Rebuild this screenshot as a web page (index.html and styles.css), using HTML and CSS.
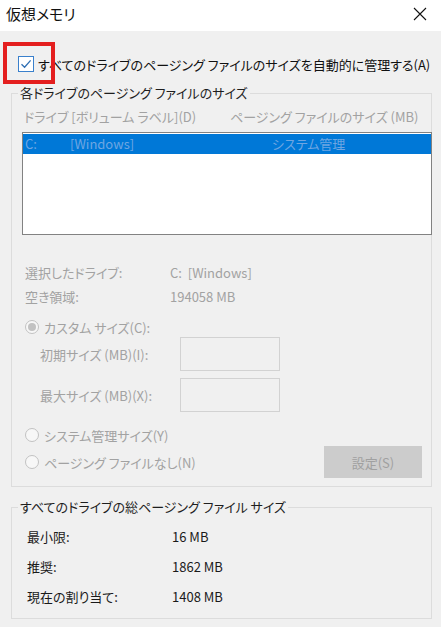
FILE: index.html
```html
<!DOCTYPE html>
<html>
<head>
    <meta charset="UTF-8">
    <title>仮想メモリ</title>
    <link rel="stylesheet" href="styles.css">
</head>
<body>
    <div class="window">
        <div class="titlebar">
            <span class="title">仮想メモリ</span>
            <svg class="close" width="14" height="14" viewBox="0 0 14 14">
                <path d="M1 1 L13 13 M13 1 L1 13" stroke="#111" stroke-width="1.1" fill="none"/>
            </svg>
        </div>

        <div class="content">
            <div class="marker"></div>

            <label class="autoRow">
                <span class="checkbox">
                    <svg width="14" height="14" viewBox="0 0 14 14">
                        <path d="M2.5 7.2 L5.6 10.2 L11.6 3.4" stroke="#2f6fb3" stroke-width="1.3" fill="none"/>
                    </svg>
                </span>
                <span>すべてのドライブのページング ファイルのサイズを自動的に管理する(A)</span>
            </label>

            <fieldset class="group perDrive">
                <legend>各ドライブのページング ファイルのサイズ</legend>

                <div class="listHead dim">
                    <span>ドライブ [ボリューム ラベル](D)</span>
                    <span>ページング ファイルのサイズ (MB)</span>
                </div>

                <div class="listBox">
                    <div class="listRow">
                        <span class="colDrive">C:</span>
                        <span class="colLabel">[Windows]</span>
                        <span class="colSize">システム管理</span>
                    </div>
                </div>

                <div class="infoGrid dim">
                    <span>選択したドライブ:</span><span>C:&nbsp; [Windows]</span>
                    <span>空き領域:</span><span>194058 MB</span>
                </div>

                <div class="radioRow dim custom">
                    <span class="radio checked"></span>
                    <span>カスタム サイズ(C):</span>
                </div>

                <div class="sizeRow dim">
                    <span>初期サイズ (MB)(I):</span>
                    <span class="textBox"></span>
                </div>
                <div class="sizeRow dim second">
                    <span>最大サイズ (MB)(X):</span>
                    <span class="textBox"></span>
                </div>

                <div class="radioRow dim sysManaged">
                    <span class="radio"></span>
                    <span>システム管理サイズ(Y)</span>
                </div>

                <div class="lastRow">
                    <div class="radioRow dim">
                        <span class="radio"></span>
                        <span>ページング ファイルなし(N)</span>
                    </div>
                    <div class="button">設定(S)</div>
                </div>
            </fieldset>

            <fieldset class="group total">
                <legend>すべてのドライブの総ページング ファイル サイズ</legend>
                <div class="totalGrid">
                    <span>最小限:</span><span>16 MB</span>
                    <span>推奨:</span><span>1862 MB</span>
                    <span>現在の割り当て:</span><span>1408 MB</span>
                </div>
            </fieldset>
        </div>
    </div>
</body>
</html>
```

FILE: styles.css
```css
* {
    box-sizing: border-box;
}
body {
    margin: 0;
    background: #f0f0f0;
    font-family: "Noto Sans CJK JP", "Noto Sans", sans-serif;
    font-feature-settings: "palt";
    font-size: 13px;
    color: #1e1e1e;
}
.window {
    width: 441px;
    height: 627px;
    overflow: hidden;
}
.titlebar {
    height: 31px;
    background: #fff;
    display: flex;
    align-items: center;
    justify-content: space-between;
    padding: 0 14px 4px 6px;
}
.title {
    font-size: 15px;
    color: #111;
}
.content {
    position: relative;
    height: 596px;
    padding-top: 23px;
}
.marker {
    position: absolute;
    left: 3px;
    top: 11px;
    width: 52px;
    height: 42px;
    border: 4px solid #e41f1f;
}
.autoRow {
    display: flex;
    align-items: center;
    gap: 4px;
    margin-left: 18px;
    height: 20px;
    font-size: 13px;
    color: #111;
}
.checkbox {
    width: 16px;
    height: 16px;
    border: 1px solid #3a80cc;
    background: #fff;
    display: flex;
    align-items: center;
    justify-content: center;
}
.group {
    margin: 0 0 0 11px;
    width: 421px;
    padding: 0;
    border: 1px solid #dcdcdc;
    min-width: 0;
}
.group legend {
    padding: 0 2px;
    margin-left: 6px;
    line-height: 18px;
    font-size: 13px;
    color: #1e1e1e;
}
.perDrive {
    margin-top: 10px;
    padding-bottom: 8px;
}
.dim {
    color: #a2a2a2;
}
.listHead {
    display: grid;
    grid-template-columns: 206px auto;
    margin: 6px 0 0 12px;
    line-height: 18px;
}
.listBox {
    margin: 6px -1px 0 10px;
    height: 103px;
    border: 1px solid #828282;
    background: #fff;
    padding-top: 1px;
}
.listRow {
    height: 20px;
    background: #0078d7;
    color: #6ea6e2;
    display: flex;
    align-items: center;
    line-height: 20px;
}
.colDrive {
    width: 47px;
    padding-left: 2px;
}
.colLabel {
    width: 202px;
}
.infoGrid {
    display: grid;
    grid-template-columns: 145px auto;
    margin: 26px 0 0 13px;
    line-height: 24px;
}
.radioRow {
    display: flex;
    align-items: center;
    gap: 5px;
    height: 20px;
}
.custom {
    margin: 8px 0 0 13px;
}
.radio {
    width: 14px;
    height: 14px;
    border-radius: 50%;
    border: 1px solid #c2c2c2;
    background: #f7f7f7;
    display: flex;
    align-items: center;
    justify-content: center;
}
.radio.checked::after {
    content: "";
    width: 8px;
    height: 8px;
    border-radius: 50%;
    background: #c2c2c2;
}
.sizeRow {
    display: grid;
    grid-template-columns: 140px 100px;
    align-items: center;
    margin-left: 28px;
    height: 34px;
}
.sizeRow.second {
    margin-top: 7px;
}
.textBox {
    height: 34px;
    border: 1px solid #d2d2d2;
    background: #f0f0f0;
}
.sysManaged {
    margin: 13px 0 0 13px;
}
.lastRow {
    display: flex;
    align-items: center;
    justify-content: space-between;
    margin: 1px 9px 0 13px;
    height: 32px;
}
.button {
    width: 98px;
    height: 32px;
    background: #cccccc;
    color: #a0a0a0;
    display: flex;
    align-items: center;
    justify-content: center;
}
.total {
    margin-top: 11px;
    padding-bottom: 6px;
}
.totalGrid {
    display: grid;
    grid-template-columns: 145px auto;
    margin: 6px 0 0 15px;
    line-height: 30px;
    color: #1a1a1a;
}
```
